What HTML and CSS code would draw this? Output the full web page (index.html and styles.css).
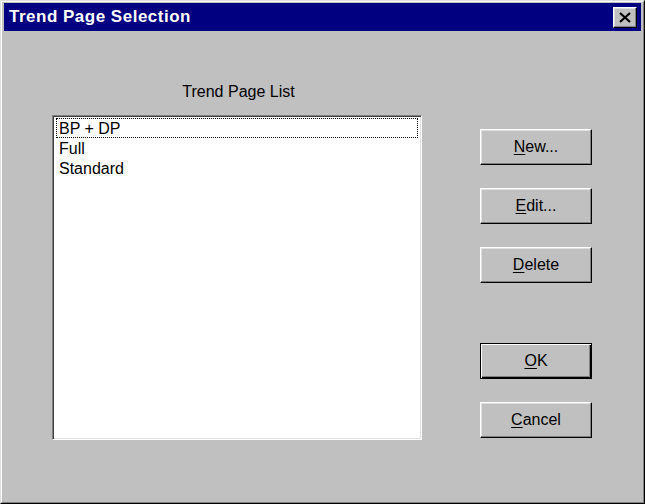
FILE: index.html
```html
<!DOCTYPE html>
<html>
<head>
<meta charset="utf-8">
<link rel="stylesheet" href="styles.css">
</head>
<body>
<div class="win">
  <div class="win-inner">
    <div class="titlebar">
      <span class="title">Trend Page Selection</span>
      <div class="close-btn">
        <svg width="12" height="11" viewBox="0 0 12 11"><path d="M1 1 L11 10 M11 1 L1 10" stroke="#000" stroke-width="2.2" fill="none"/></svg>
      </div>
    </div>
    <div class="content">
      <div class="list-col">
        <div class="list-label">Trend Page List</div>
        <div class="listbox">
          <div class="item focused">BP + DP</div>
          <div class="item">Full</div>
          <div class="item">Standard</div>
        </div>
      </div>
      <div class="btn-col">
        <div class="btn"><span><u>N</u>ew...</span></div>
        <div class="btn"><span><u>E</u>dit...</span></div>
        <div class="btn"><span><u>D</u>elete</span></div>
        <div class="btn default spaced"><span><u>O</u>K</span></div>
        <div class="btn"><span><u>C</u>ancel</span></div>
      </div>
    </div>
  </div>
</div>
</body>
</html>
```
FILE: styles.css
```css
html, body {
  margin: 0;
  padding: 0;
  background: #c0c0c0;
}
.win {
  width: 645px;
  height: 504px;
  box-sizing: border-box;
  border-top: 1px solid #dfdfdf;
  border-left: 1px solid #dfdfdf;
  border-right: 1px solid #000;
  border-bottom: 1px solid #000;
  background: #c0c0c0;
  font-family: "Liberation Sans", Arial, sans-serif;
}
.win-inner {
  height: 100%;
  box-sizing: border-box;
  border-top: 1px solid #fff;
  border-left: 1px solid #fff;
  border-right: 1px solid #808080;
  border-bottom: 1px solid #808080;
  padding: 1px 2px 2px 2px;
}
.titlebar {
  height: 28px;
  background: #000080;
  display: flex;
  align-items: center;
  justify-content: space-between;
  padding: 0 4px 0 5px;
}
.title {
  color: #fff;
  font-weight: bold;
  font-size: 17px;
  letter-spacing: 0.5px;
}
.close-btn {
  width: 24px;
  height: 21px;
  box-sizing: border-box;
  background: #c0c0c0;
  border-top: 1px solid #fff;
  border-left: 1px solid #fff;
  border-right: 1px solid #000;
  border-bottom: 1px solid #000;
  box-shadow: inset -1px -1px 0 #808080, inset 1px 1px 0 #dfdfdf;
  display: flex;
  align-items: center;
  justify-content: center;
}
.content {
  display: flex;
  padding-left: 48px;
  font-size: 16px;
}
.list-col {
  width: 370px;
  display: flex;
  flex-direction: column;
  padding-top: 52px;
}
.list-label {
  text-align: center;
  height: 32px;
  line-height: 18px;
  padding-left: 3px;
}
.listbox {
  width: 370px;
  height: 325px;
  box-sizing: border-box;
  background: #fff;
  border-top: 1px solid #808080;
  border-left: 1px solid #808080;
  border-right: 1px solid #fff;
  border-bottom: 1px solid #fff;
  box-shadow: inset 1px 1px 0 #404040, inset -1px -1px 0 #dfdfdf;
  padding: 2px 3px;
}
.item {
  height: 20px;
  line-height: 20px;
  padding-left: 2px;
  border: 1px solid transparent;
  box-sizing: border-box;
}
.item.focused {
  border: 1px dotted #000;
}
.btn-col {
  margin-left: 58px;
  padding-top: 98px;
  display: flex;
  flex-direction: column;
  gap: 23px;
}
.btn {
  width: 112px;
  height: 36px;
  box-sizing: border-box;
  background: #c0c0c0;
  border-top: 1px solid #fff;
  border-left: 1px solid #fff;
  border-right: 1px solid #000;
  border-bottom: 1px solid #000;
  box-shadow: inset -1px -1px 0 #808080, inset 1px 1px 0 #dfdfdf;
  display: flex;
  align-items: center;
  justify-content: center;
  font-size: 16px;
}
.btn.default {
  border: 1px solid #000;
  box-shadow: inset 1px 1px 0 #fff, inset -1px -1px 0 #000, inset -2px -2px 0 #808080;
}
.btn.spaced {
  margin-top: 37px;
}
u {
  text-decoration: underline;
  text-underline-offset: 2px;
}
```
